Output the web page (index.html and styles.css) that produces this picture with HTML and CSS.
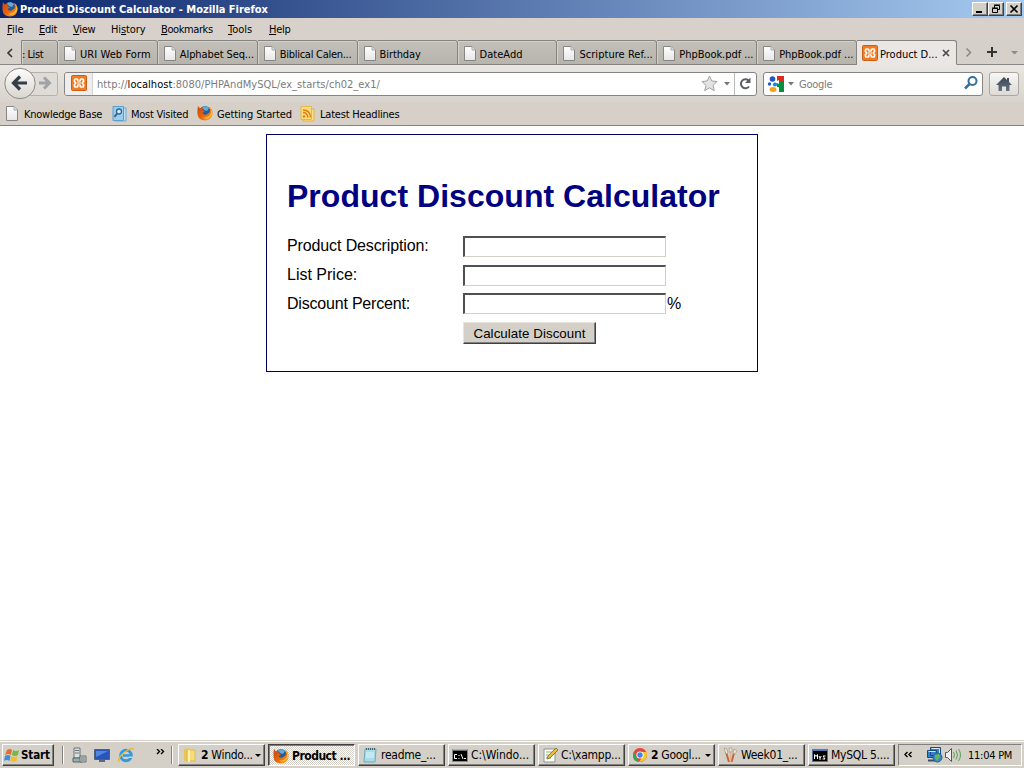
FILE: index.html
```html
<!DOCTYPE html>
<html lang="en">
<head>
<meta charset="utf-8">
<title>Product Discount Calculator - Mozilla Firefox</title>
<link rel="stylesheet" href="styles.css">
</head>
<body>
<svg class="defs" aria-hidden="true">
  <defs>
    <linearGradient id="paper" x1="0" y1="0" x2="0" y2="1"><stop offset="0" stop-color="#fff"/><stop offset="1" stop-color="#e6e6e6"/></linearGradient>
    <linearGradient id="flame" x1="0" y1="0" x2="1" y2="1"><stop offset="0" stop-color="#c7440c"/><stop offset=".55" stop-color="#e9680f"/><stop offset="1" stop-color="#ffb12a"/></linearGradient>
    <linearGradient id="house" x1="0" y1="0" x2="0" y2="1"><stop offset="0" stop-color="#3b4655"/><stop offset="1" stop-color="#677382"/></linearGradient>
    <symbol id="page" viewBox="0 0 12 15"><path d="M.5.5h7.500l3.500 3.500v10.500h-11z" fill="url(#paper)" stroke="#858585"/><path d="M8 .5V4h3.500" fill="#ddd" stroke="#aaa"/></symbol>
    <symbol id="firefox" viewBox="0 0 16 16"><circle cx="8" cy="6.500" r="5.500" fill="#245b9b"/><path d="M5 2q4-2 7 1l-2 3-3-1z" fill="#63add4"/><path d="M1 1l2 2.500Q4 2.500 6 3L5.500 5l2.500 1.500-2.500 1.500q1 2.500 4 1.500l3-2q1-3-.5-5.500 4 2 3.500 7-1 6-7.500 6.500Q1 15 .5 9 .3 4 1 1z" fill="url(#flame)"/><path d="M12 2q3 4 1.500 7.500-3 4-8 3 5 3 9-2 2.500-5-2.500-8.500z" fill="#ffc23b"/></symbol>
    <symbol id="xampp" viewBox="0 0 16 16"><rect x=".5" y=".5" width="15" height="15" rx="1" fill="#f47b20" stroke="#c95e16"/><path d="M6.800 6V5Q6.800 4 5.800 4H4.500Q3.500 4 3.500 5v1.500L4.700 8 3.500 9.500V11q0 1 1 1h1.300q1 0 1-1v-1M9.200 6V5q0-1 1-1h1.300q1 0 1 1v1.500L11.300 8l1.200 1.500V11q0 1-1 1h-1.300q-1 0-1-1v-1" fill="none" stroke="#fff" stroke-width="1.700"/><path d="M6.500 6.200h3v3.600h-3z" fill="#fff"/><path d="M7 8h2" stroke="#f47b20" stroke-width="1.200"/></symbol>
  </defs>
</svg>

<div class="titlebar">
  <svg class="i16"><use href="#firefox"/></svg>
  <span class="title-text">Product Discount Calculator - Mozilla Firefox</span>
  <div class="win-buttons">
    <span class="wb"><svg width="14" height="12"><path d="M3 9h6" stroke="#000" stroke-width="2"/></svg></span>
    <span class="wb"><svg width="14" height="12"><path d="M5.500 5V2.500h5v4H8M5 2h6M3.500 5.500h5v4h-5zM3 5h6" fill="none" stroke="#000"/></svg></span>
    <span class="wb wb-close"><svg width="14" height="12"><path d="M3.500 2.500l7 7m0-7l-7 7" stroke="#000" stroke-width="1.700"/></svg></span>
  </div>
</div>

<div class="menubar">
  <span class="m-file"><u>F</u>ile</span><span class="m-edit"><u>E</u>dit</span><span class="m-view"><u>V</u>iew</span><span class="m-history">Hi<u>s</u>tory</span><span class="m-bookmarks"><u>B</u>ookmarks</span><span class="m-tools"><u>T</u>ools</span><span class="m-help"><u>H</u>elp</span>
</div>

<div class="tabs">
  <div class="tab-scroll"><svg width="8" height="10"><path d="M6 1L2 5l4 4" fill="none" stroke="#333" stroke-width="1.600"/></svg></div>
  <div class="tab tab-cut"><span>: List</span></div>
  <div class="tab"><svg class="pg"><use href="#page"/></svg><span class="t-uri">URI Web Form</span></div>
  <div class="tab"><svg class="pg"><use href="#page"/></svg><span class="t-alpha">Alphabet Seq...</span></div>
  <div class="tab"><svg class="pg"><use href="#page"/></svg><span class="t-bib">Biblical Calen...</span></div>
  <div class="tab"><svg class="pg"><use href="#page"/></svg><span class="t-birth">Birthday</span></div>
  <div class="tab"><svg class="pg"><use href="#page"/></svg><span class="t-date">DateAdd</span></div>
  <div class="tab"><svg class="pg"><use href="#page"/></svg><span class="t-scr">Scripture Ref...</span></div>
  <div class="tab"><svg class="pg"><use href="#page"/></svg><span class="t-php">PhpBook.pdf ...</span></div>
  <div class="tab"><svg class="pg"><use href="#page"/></svg><span class="t-php">PhpBook.pdf ...</span></div>
  <div class="tab tab-active"><svg class="i16"><use href="#xampp"/></svg><span class="t-prod">Product D...</span><svg class="tab-x" width="8" height="8"><path d="M1 1l6 6m0-6L1 7" stroke="#4c4c4c" stroke-width="1.700"/></svg></div>
  <div class="tab-tools">
    <svg width="67" height="24"><path d="M9.500 8.500l4 4-4 4" fill="none" stroke="#8d8b87" stroke-width="1.600"/><path d="M30 12h10M35 7v10" stroke="#333" stroke-width="2"/><path d="M54 11h7l-3.500 3.500z" fill="#8d8b87"/></svg>
  </div>
</div>

<div class="navbar">
  <svg class="backfwd" width="60" height="34"><defs><linearGradient id="btn" x1="0" y1="0" x2="0" y2="1"><stop offset="0" stop-color="#fdfdfc"/><stop offset="1" stop-color="#d9d5cf"/></linearGradient></defs><rect x="24" y="5.500" width="33.500" height="23" rx="2" fill="#dfdcd7" stroke="#b5b1ab"/><circle cx="20" cy="16.500" r="15.200" fill="url(#btn)" stroke="#8c8a86"/><path d="M20 9.500l-6.500 6.500 6.500 6.500M14 16h13" fill="none" stroke="#343d48" stroke-width="3.200"/><path d="M44 10.500l5.500 5.500-5.500 5.500M49 16H39" fill="none" stroke="#a0a3a5" stroke-width="3"/></svg>
  <div class="urlbar">
    <div class="identity"><svg class="i16"><use href="#xampp"/></svg></div>
    <div class="url">http://<b>localhost</b>:8080/PHPAndMySQL/ex_starts/ch02_ex1/</div>
    <svg class="url-icons" width="56" height="22"><path d="M9.500 3l2.300 5 5.400.5-4.100 3.800 1.200 5.400-4.800-2.900-4.800 2.900L6 12.300 1.900 8.500 7.200 8z" fill="#e3e3e3" stroke="#a2a2a2"/><path d="M24 9h6l-3 3.500z" fill="#777"/><path d="M34.500 0v22" stroke="#b9b9b9"/><path d="M48.500 7.500A4.500 4.500 0 1 0 49 13.500" fill="none" stroke="#5b5f64" stroke-width="2"/><path d="M50.500 4.500V10H45z" fill="#5b5f64"/></svg>
  </div>
  <div class="search">
    <svg width="32" height="22"><rect x="4" y="3" width="16" height="16" fill="#fff"/><path d="M13 3h7v5h-7z" fill="#dd2c1c"/><path d="M13 8h7v11h-5v-5h-2z" fill="#078f40"/><path d="M11 9l4-2v4z" fill="#fff"/><circle cx="8.500" cy="6" r="2.800" fill="#2557c7"/><circle cx="5.500" cy="11" r="1.700" fill="#2557c7"/><circle cx="11" cy="11.500" r="2.100" fill="#178bd2"/><ellipse cx="9" cy="16.500" rx="3.500" ry="2.500" fill="#f6a21c"/><path d="M24 9h6l-3 3.500z" fill="#777"/></svg>
    <span>Google</span>
    <svg class="lens" width="16" height="18"><circle cx="10.500" cy="6" r="4" fill="none" stroke="#34709c" stroke-width="2"/><path d="M7.500 9L3 13.500" stroke="#34709c" stroke-width="2.500"/></svg>
  </div>
  <div class="home"><svg width="18" height="16"><path d="M9 0L1 8h2.500v6H7V9.500h4V14h3.500V8H17l-3-3V1h-2v2z" fill="url(#house)"/></svg></div>
</div>

<div class="bookmarks">
  <svg class="pg"><use href="#page"/></svg><span class="b-know">Knowledge Base</span>
  <svg class="b-icon" viewBox="0 0 15 16"><path d="M3 2h11v13H3z" fill="#b9dcf1" stroke="#6faed6"/><path d="M1 .5h10.500v14H1z" fill="#9dcdec" stroke="#5a9fce"/><circle cx="7" cy="5.500" r="2.500" fill="#d8effb" stroke="#2a679b" stroke-width="1.300"/><path d="M5 7.500L2.500 11" stroke="#2a679b" stroke-width="2"/></svg><span class="b-most">Most Visited</span>
  <svg class="i16 b-fox"><use href="#firefox"/></svg><span class="b-get">Getting Started</span>
  <svg class="b-icon b-rss" viewBox="0 0 15 16"><path d="M3 3h11v12H3z" fill="#f9df80" stroke="#dbb64a"/><path d="M1 .5h10.500v13H1z" fill="#f8dc7e" stroke="#e3b84e"/><circle cx="4" cy="10.500" r="1.200" fill="#e47b0b"/><path d="M3 6.500q4 0 5 5M3 4q7 0 7.500 7.500" fill="none" stroke="#e47b0b" stroke-width="1.400"/></svg><span class="b-late">Latest Headlines</span>
</div>

<main class="viewport">
  <form class="calculator">
    <h1>Product Discount Calculator</h1>
    <div class="row"><label class="l-desc">Product Description:</label><input type="text"></div>
    <div class="row row-mid"><label>List Price:</label><input type="text"></div>
    <div class="row row-last"><label class="l-pct">Discount Percent:</label><input type="text"><span class="pct">%</span></div>
    <div class="row"><label></label><button type="button">Calculate Discount</button></div>
  </form>
</main>

<div class="taskbar">
  <div class="task start"><svg width="17" height="16"><path d="M3 3q3-2 5 0L7 8Q4 6 1 8z" fill="#e5702c"/><path d="M9 3q3 2 6 0l-1 5q-3 2-6 0z" fill="#79b848"/><path d="M1 9q3-2 5.500 0l-1 5Q3 12 0 14z" fill="#3f8edb"/><path d="M7.500 9q3 2 6 0l-1 5q-3 2-6 0z" fill="#f2bd2c"/></svg><b>Start</b></div>
  <div class="quick">
    <i class="sep"></i>
    <svg class="i16 q1" viewBox="0 0 16 16"><path d="M2 1h6v10H2z" fill="#dce0df" stroke="#687477"/><path d="M3 3.500h4M3 6h4" stroke="#687477"/><path d="M1 11h9v4H1z" fill="#9aaeb0" stroke="#526467"/><path d="M8 9h6v6H8z" fill="#d5d9d6" stroke="#606f70"/><path d="M9 11h4M9 13h4" stroke="#667"/></svg>
    <svg class="i16 q2" viewBox="0 0 16 16"><path d="M.5 2.500h15v10H.5z" fill="#2855b7" stroke="#50617d"/><path d="M2 4h12L2 10z" fill="#5087e0"/><path d="M5 14h6" stroke="#5b687b" stroke-width="2"/></svg>
    <svg class="i16 q3" viewBox="0 0 16 16"><circle cx="8" cy="8.500" r="5.300" fill="none" stroke="#2d9be0" stroke-width="3"/><path d="M5 8.500h9" stroke="#2d9be0" stroke-width="2.500"/><path d="M11 11h5v-1.500h-5z" fill="#d5d0c8"/><path d="M1 15Q-1 11 7 5q8-6 8-2" fill="none" stroke="#efb638" stroke-width="1.500"/></svg>
    <svg class="more" width="9" height="6"><path d="M1 0l2.500 2.500L1 5M5 0l2.500 2.500L5 5" fill="none" stroke="#000" stroke-width="1.400"/></svg>
    <i class="sep sep2"></i>
  </div>
  <div class="tasks">
    <div class="task"><svg class="i16" viewBox="0 0 16 16"><path d="M2 2l5-1v14l-5-1z" fill="#e8c555"/><path d="M5 3h8v11H5z" fill="#f5dc7e" stroke="#dfba4d"/><path d="M7 3v12" stroke="#fff0ad" stroke-width="2"/></svg><span class="k-win"><b>2</b> Windo...</span><i class="drop"></i></div>
    <div class="task pressed"><svg class="i16"><use href="#firefox"/></svg><b>Product ...</b></div>
    <div class="task"><svg class="i16" viewBox="0 0 16 16"><path d="M3 2h11l-1 13H2z" fill="#a8dce9" stroke="#6babba"/><path d="M4 2h9" stroke="#48656e" stroke-width="2" stroke-dasharray="1 1"/><path d="M4 6h8M4 8h8M4 10h8" stroke="#ddf4fa"/></svg><span class="k-read">readme_...</span></div>
    <div class="task"><svg class="i16" viewBox="0 0 16 16"><path d="M.5 2.500h15v12H.5z" fill="#000" stroke="#888"/><path d="M1 3h14" stroke="#ddd"/><path d="M5 7.500H2.500v4H5M7 8v1m0 2v1M9 7l2 5M12 11.500h2" stroke="#fff" fill="none"/></svg><span class="k-cw">C:\Windo...</span></div>
    <div class="task"><svg class="i16" viewBox="0 0 16 16"><path d="M2 2h11v13H2z" fill="#fff" stroke="#89958d"/><path d="M4 5h6M4 8h7M4 11h5" stroke="#8ab16b"/><path d="M14 1l2 2-8 8-3 1 1-3z" fill="#edbb3c" stroke="#768052"/></svg><span class="k-cx">C:\xampp...</span></div>
    <div class="task"><svg class="i16" viewBox="0 0 16 16"><circle cx="8" cy="8" r="7" fill="#e8453c"/><path d="M2 5l5 10Q0 14 1 7z" fill="#35a853"/><path d="M8 5h6.500q2 9-7.500 10l4-6z" fill="#f9cd28"/><circle cx="8" cy="8" r="3.600" fill="#fff"/><circle cx="8" cy="8" r="2.700" fill="#4285e8"/></svg><span class="k-goo"><b>2</b> Googl...</span><i class="drop"></i></div>
    <div class="task"><svg class="i16" viewBox="0 0 16 16"><path d="M4 5l3 10M12 6l-2.500 9" stroke="#c3643d" stroke-width="2"/><path d="M8.500 5v10" stroke="#e0b38c" stroke-width="1.500"/><path d="M2 1l3 1 1 4-2 1zM7 1h3v4H7.500zM12 2l3 2-2 3-2-1z" fill="#efe3d1" stroke="#aa9685" stroke-width=".7"/></svg><span class="k-week">Week01_...</span></div>
    <div class="task"><svg class="i16" viewBox="0 0 16 16"><path d="M.5 2.500h15v12H.5z" fill="#000" stroke="#536f9a"/><path d="M1 3h14" stroke="#4e7bba" stroke-width="2"/><path d="M2.500 12V7.500l1.500 2 1.500-2V12M7 9l1 2 1.200-2M8 11v2M13.500 9H11l2 3h-2.500" fill="none" stroke="#fff"/></svg><span class="k-my">MySQL 5....</span></div>
  </div>
  <div class="tray">
    <svg width="53" height="18"><path d="M8.500 6L6 8.500 8.500 11M12.500 6L10 8.500l2.500 2.500" fill="none" stroke="#000" stroke-width="1.400"/><path d="M31.500 1.500h10v8h-10zM28.500 4.500h9v7h-9z" fill="#3680ce" stroke="#174a80"/><path d="M32.500 2.500h8v6M29.500 5.500h7" fill="none" stroke="#d4e7f5"/><path d="M29 14.500h8" stroke="#34516d" stroke-width="2"/><circle cx="38.500" cy="11.500" r="4.500" fill="#3687c7" stroke="#27608b"/><path d="M36 9l4-1 1 3-3 4-2-3z" fill="#65b55b"/><path d="M46.500 6.500h2l4-4v13l-4-4h-2z" fill="#eee" stroke="#555"/></svg>
    <svg class="waves" width="10" height="18"><path d="M1.500 6q2 3 0 6M4 4.500q3 4.500 0 9M6.500 3q4 6 0 12" fill="none" stroke="#59a45c"/></svg>
    <span>11:04 PM</span>
  </div>
</div>
</body>
</html>
```
FILE: styles.css
```css
* { box-sizing: border-box; }
body {
  margin: 0; width: 1024px; height: 768px; overflow: hidden;
  display: flex; flex-direction: column; background: #fff;
  font: 11px/14px "DejaVu Sans Condensed", "DejaVu Sans", sans-serif; font-stretch: condensed;
  letter-spacing: -.25px; color: #000; white-space: nowrap;
}
svg { display: block; flex: none; }
.defs { position: absolute; width: 0; height: 0; }
.i16 { width: 16px; height: 16px; }
.pg { width: 12px; height: 15px; }

.titlebar { height: 18px; flex: none; display: flex; align-items: center; padding: 0 2px; background: linear-gradient(90deg, #0a246a, #a6caf0); color: #fff; font-weight: bold; }
.title-text { margin-left: 2px; padding-top: 1px; letter-spacing: -.03px; }
.win-buttons { display: flex; margin-left: auto; }
.wb { width: 16px; height: 14px; background: #d4d0c8; border: 1px solid; border-color: #fff #404040 #404040 #fff; box-shadow: inset -1px -1px #808080; }
.wb-close { margin-left: 2px; }

.menubar { height: 22px; flex: none; display: flex; align-items: center; padding: 2px 0 0 7px; background: #d8d1cb; }
.m-file { width: 32px; letter-spacing: 0; } .m-edit { width: 34px; } .m-view { width: 38px; } .m-history { width: 50px; letter-spacing: -.1px; } .m-bookmarks { width: 67px; letter-spacing: -.4px; } .m-tools { width: 41px; letter-spacing: 0; }

.tabs { height: 25px; flex: none; display: flex; background: #d6d0ca; }
.tab-scroll { width: 21px; border-bottom: 1px solid #898783; padding: 8px 0 0 6px; }
.tab { width: 100px; height: 25px; display: flex; align-items: center; padding: 2px 0 0 6px; background: linear-gradient(#c3bfb9, #b7b3ad); border: solid #858380; border-width: 1px 1px 1px 0; border-top-right-radius: 3px; box-shadow: inset 1px 1px #d4d0ca; overflow: hidden; }
.tab span { padding-top: 2px; }
.tab .pg { margin: -1px 4px 0 0; }
.tab-cut { width: 37px; padding-left: 0; border-left: 1px solid #858380; letter-spacing: -.45px; }
.t-uri { letter-spacing: .08px; }
.t-alpha { letter-spacing: -.1px; }
.t-bib { letter-spacing: -.27px; }
.t-birth { letter-spacing: -.1px; }
.t-date { letter-spacing: .05px; }
.t-scr { letter-spacing: .05px; }
.t-php { letter-spacing: -.05px; }
.t-prod { letter-spacing: -.02px; }
.tab-active { background: #e9e6e3; border-bottom-color: #e9e6e3; padding-left: 5px; box-shadow: none; }
.tab-active .i16 { margin: -2px 2px 0 0; }
.tab-x { margin: -1px 6px 0 auto; }
.tab-tools { flex: 1; border-bottom: 1px solid #898783; }

.navbar { height: 37px; flex: none; display: flex; align-items: center; background: linear-gradient(#e9e6e3, #d8d3cd); }
.backfwd { width: 64px; }
.urlbar, .search { height: 24px; border: 1px solid #858585; border-radius: 3px; background: #fff; display: flex; align-items: center; color: #7b7b7b; }
.urlbar { width: 693px; }
.identity { width: 28px; height: 22px; padding: 2px 0 0 6px; background: #f0eeec; border-right: 1px solid #d4d2cf; border-radius: 3px 0 0 3px; }
.url { margin-left: 4px; padding-top: 2px; letter-spacing: .04px; }
.url b { font-weight: normal; color: #000; }
.url-icons { margin-left: auto; }
.search { width: 220px; margin-left: 6px; }
.search span { margin-left: 3px; padding-top: 2px; }
.lens { margin-left: auto; margin-right: 4px; }
.home { width: 30px; height: 24px; margin-left: 6px; padding: 4px 0 0 5px; border: 1px solid #aaa6a1; border-radius: 3px; background: linear-gradient(#f8f7f5, #dedad5); }

.bookmarks { height: 24px; flex: none; display: flex; align-items: center; padding-left: 6px; background: #d6d0c8; border-bottom: 1px solid #858380; }
.bookmarks span { margin-left: 5px; padding-top: 2px; }
.b-icon { width: 15px; height: 16px; }
.b-fox { margin-top: -2px; }
.bookmarks .b-know { width: 88px; margin-left: 6px; }
.bookmarks .b-most { width: 66px; margin-left: 4px; }
.bookmarks .b-get { width: 83px; margin-left: 4px; letter-spacing: -.1px; }
.bookmarks .b-late { letter-spacing: -.2px; }

.viewport { flex: 1; padding-top: 8px; }
.calculator { width: 492px; height: 238px; margin: 0 auto; padding: 43px 20px 0; border: 1px solid #000060; font: 16px/18px "Liberation Sans", Arial, sans-serif; letter-spacing: 0; }
.calculator h1 { margin: 0 0 21px; font-size: 32px; line-height: 37px; letter-spacing: .03px; color: #000080; }
.row { display: flex; height: 29px; align-items: flex-start; }
.row-mid { height: 28px; }
.row label { width: 176px; padding-top: 1px; }
.row .l-desc { letter-spacing: -.12px; }
.row .l-pct { padding-top: 2px; letter-spacing: -.2px; }
.row input { width: 203px; height: 21px; border: 2px solid; border-color: #505050 #d4d0c8 #d4d0c8 #505050; border-width: 2px 1px 1px 2px; padding: 0; background: #fff; border-radius: 0; }
.pct { margin: 2px 0 0 1px; letter-spacing: -.5px; }
.row button { width: 133px; height: 22px; padding: 1px 0 0; font: 13.33px/18px "Liberation Sans", Arial, sans-serif; letter-spacing: .05px; background: #d4d0c8; color: #000; border: 1px solid; border-color: #e8e5df #404040 #404040 #e8e5df; box-shadow: inset -1px -1px #808080; border-radius: 0; }

.taskbar { height: 28px; flex: none; display: flex; padding-top: 4px; background: #d4d0c8; box-shadow: inset 0 1px #d4d0c8, inset 0 2px #fff; }
.task { width: 87px; height: 22px; display: flex; align-items: center; padding: 0 3px; font-size: 12px; border: 1px solid; border-color: #fff #404040 #404040 #fff; box-shadow: inset -1px -1px #808080; overflow: hidden; }
.task .i16 { margin-right: 3px; }
.start { width: 52px; margin-left: 2px; padding: 0 1px; font-size: 11.5px; letter-spacing: -.1px; }
.quick { width: 124px; display: flex; align-items: center; height: 22px; }
.sep { width: 2px; height: 18px; margin-left: 8px; border-left: 1px solid #808080; border-right: 1px solid #fff; }
.q1 { margin-left: 8px; } .q2 { margin-left: 6px; } .q3 { margin-left: 8px; }
.more { margin: 0 0 6px 22px; }
.sep2 { margin-left: 6px; }
.tasks { display: flex; gap: 3px; }
.drop { width: 0; border: 3px solid transparent; border-top-color: #000; border-bottom: 0; margin-left: auto; }
.k-win, .k-goo { letter-spacing: -.3px; }
.pressed { letter-spacing: -.5px; border-color: #404040 #fff #fff #404040; box-shadow: inset 1px 1px #808080; background: repeating-conic-gradient(#fff 0 25%, #d4d0c8 0 50%) 0 0 / 2px 2px; padding: 1px 0 0 4px; }
.k-cw { letter-spacing: -.05px; }
.tray { width: 124px; height: 22px; margin-left: 3px; display: flex; align-items: center; border: 1px solid; border-color: #808080 #fff #fff #808080; font-size: 11px; }
.tray span { margin-left: 6px; padding-top: 1px; }
```
